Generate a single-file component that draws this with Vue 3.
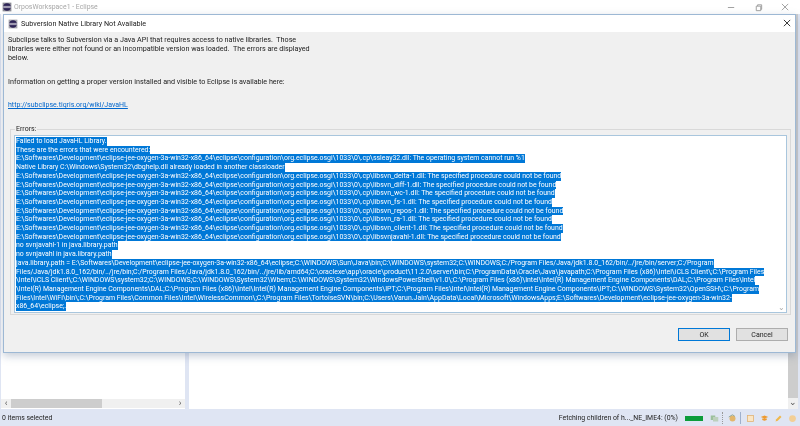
<template>
  <div class="workbench">
    <header class="window-bar">
      <svg class="app-icon" viewBox="0 0 16 16"><rect x="1" y="1" width="14" height="14" fill="#8d8d96"/><circle cx="8" cy="8" r="6" fill="#2c2255"/><path d="M2 7h12M2 9h12" stroke="#fff" stroke-width="1"/></svg>
      <span class="window-title">OrposWorkspace1 - Eclipse</span>
      <div class="window-controls">
        <svg viewBox="0 0 10 10"><path d="M1 5h7" stroke="#999"/></svg>
        <svg viewBox="0 0 10 10"><path d="M2.5 3.5h5v5h-5zM4 3.5V2h4.500v5H7.500" fill="none" stroke="#999"/></svg>
        <svg viewBox="0 0 10 10"><path d="M1 1l7 7M8 1l-7 7" stroke="#999"/></svg>
      </div>
    </header>

    <main class="panels">
      <section class="panel left-panel">
        <div class="h-scroll">
          <span class="arrow">‹</span>
          <div class="h-track"><div class="h-thumb"></div></div>
          <span class="arrow">›</span>
        </div>
      </section>
      <section class="panel right-panel">
        <div class="v-scroll">
          <div class="v-thumb"></div>
          <span class="v-arrow">⌄</span>
        </div>
      </section>
    </main>

    <footer class="status-bar">
      <span class="status-left">0 items selected</span>
      <div class="status-right">
        <span class="job">Fetching children of h..._NE_IME4: (0%)</span>
        <div class="progress"></div>
        <svg class="tray" viewBox="0 0 12 12"><rect x="1" y="2" width="6" height="6" fill="#9cc09c"/><rect x="4" y="4" width="7" height="6" fill="#bcd0bc"/></svg>
        <div class="sep"></div>
        <svg class="tray" viewBox="0 0 12 12"><circle cx="6" cy="6" r="4" fill="#e3b66c"/><path d="M1 4l5-3 3 2" fill="none" stroke="#7d9a86"/></svg>
        <div class="sep solid"></div>
        <svg class="tray" viewBox="0 0 12 12"><rect x="2" y="2" width="8" height="8" fill="#fbe6c4" stroke="#e0b070"/></svg>
        <svg class="tray" viewBox="0 0 12 12"><path d="M1 4l5-2 5 2-5 2zM3 6v2l3 1 3-1V6" fill="#ee9a2e"/></svg>
        <svg class="tray" viewBox="0 0 12 12"><path d="M2 10l1-3 5-5 2 2-5 5z" fill="#f0b84c"/></svg>
        <svg class="tray" viewBox="0 0 12 12"><circle cx="6" cy="6" r="4.500" fill="#f3cf96"/></svg>
      </div>
    </footer>

    <div class="dialog">
      <div class="dialog-title">
        <svg class="dialog-icon" viewBox="0 0 16 16"><rect x="1" y="1" width="14" height="14" fill="#a5a5ad"/><circle cx="8" cy="8" r="6" fill="#2c2255"/><path d="M2 7h12M2 9h12" stroke="#fff" stroke-width="1"/></svg>
        <span class="dialog-name">Subversion Native Library Not Available</span>
        <svg class="dialog-close" viewBox="0 0 10 10"><path d="M1 1l7 7M8 1l-7 7" stroke="#333" stroke-width="1.100"/></svg>
      </div>
      <div class="dialog-body">
        <p class="intro">Subclipse talks to Subversion via a Java API that requires access to native libraries.&nbsp; Those<br>libraries were either not found or an incompatible version was loaded.&nbsp; The errors are displayed<br>below.</p>
        <p class="info">Information on getting a proper version installed and visible to Eclipse is available here:</p>
        <a class="link">http://subclipse.tigris.org/wiki/JavaHL</a>
        <fieldset class="errors">
          <legend>Errors:</legend>
          <div class="error-box">
            <div class="error-lines">
              <div v-for="(line, i) in lines" :key="i" class="line">{{ line }}</div>
            </div>
            <span class="box-arrow">⌄</span>
          </div>
        </fieldset>
        <div class="buttons">
          <button class="btn primary">OK</button>
          <button class="btn">Cancel</button>
        </div>
      </div>
    </div>
  </div>
</template>

<script setup>
const base = String.raw`E:\Softwares\Development\eclipse-jee-oxygen-3a-win32-x86_64\eclipse\configuration\org.eclipse.osgi\1033\0\.cp` + '\\'
const notFound = 'The specified procedure could not be found'

const lines = [
  'Failed to load JavaHL Library.',
  'These are the errors that were encountered:',
  base + 'ssleay32.dll: The operating system cannot run %1',
  String.raw`Native Library C:\Windows\System32\dbghelp.dll already loaded in another classloader`,
  base + 'libsvn_delta-1.dll: ' + notFound,
  base + 'libsvn_diff-1.dll: ' + notFound,
  base + 'libsvn_wc-1.dll: ' + notFound,
  base + 'libsvn_fs-1.dll: ' + notFound,
  base + 'libsvn_repos-1.dll: ' + notFound,
  base + 'libsvn_ra-1.dll: ' + notFound,
  base + 'libsvn_client-1.dll: ' + notFound,
  base + 'libsvnjavahl-1.dll: ' + notFound,
  'no svnjavahl-1 in java.library.path',
  'no svnjavahl in java.library.path',
  String.raw`java.library.path = E:\Softwares\Development\eclipse-jee-oxygen-3a-win32-x86_64\eclipse;C:\WINDOWS\Sun\Java\bin;C:\WINDOWS\system32;C:\WINDOWS;C:/Program Files/Java/jdk1.8.0_162/bin/../jre/bin/server;C:/Program`,
  String.raw`Files/Java/jdk1.8.0_162/bin/../jre/bin;C:/Program Files/Java/jdk1.8.0_162/bin/../jre/lib/amd64;C:\oraclexe\app\oracle\product\11.2.0\server\bin;C:\ProgramData\Oracle\Java\javapath;C:\Program Files (x86)\Intel\iCLS Client\;C:\Program Files`,
  String.raw`\Intel\iCLS Client\;C:\WINDOWS\system32;C:\WINDOWS;C:\WINDOWS\System32\Wbem;C:\WINDOWS\System32\WindowsPowerShell\v1.0\;C:\Program Files (x86)\Intel\Intel(R) Management Engine Components\DAL;C:\Program Files\Intel`,
  String.raw`\Intel(R) Management Engine Components\DAL;C:\Program Files (x86)\Intel\Intel(R) Management Engine Components\IPT;C:\Program Files\Intel\Intel(R) Management Engine Components\IPT;C:\WINDOWS\System32\OpenSSH\;C:\Program`,
  String.raw`Files\Intel\WiFi\bin\;C:\Program Files\Common Files\Intel\WirelessCommon\;C:\Program Files\TortoiseSVN\bin;C:\Users\Varun.Jain\AppData\Local\Microsoft\WindowsApps;E:\Softwares\Development\eclipse-jee-oxygen-3a-win32-`,
  String.raw`x86_64\eclipse;.`,
]
</script>

<style>
html, body { margin: 0; background: #fff; }
</style>

<style scoped>
.workbench {
  position: relative;
  width: 800px; height: 426px;
  display: flex; flex-direction: column;
  overflow: hidden;
  background: #dfe5f3;
  font-family: Roboto, "Noto Sans", sans-serif;
  color: #222;
  filter: blur(0.25px);
}

.window-bar {
  height: 14px; flex-shrink: 0;
  display: flex; align-items: center;
  background: #fff;
  padding-left: 2px;
}
.app-icon { width: 10px; height: 10px; margin-right: 2px; }
.window-title { font-size: 6.900px; color: #a8a8a8; }
.window-controls { margin-left: auto; display: flex; gap: 18px; padding-right: 10px; }
.window-controls svg { width: 9px; height: 9px; }

.panels { flex: 1; display: flex; gap: 4px; padding: 0 2px 1px 1px; background: #dfe5f3; min-height: 0; }
.panel { background: #fff; position: relative; display: flex; }
.left-panel { width: 184px; align-items: flex-end; }
.right-panel { flex: 1; justify-content: flex-end; }

.h-scroll { width: 100%; height: 9px; margin-bottom: 1px; display: flex; align-items: center; background: #f0f0f0; }
.arrow { width: 10px; font-size: 9px; line-height: 9px; text-align: center; color: #555; }
.h-track { flex: 1; height: 100%; }
.h-thumb { width: 91px; height: 100%; background: #cdcdcd; }

.v-scroll { width: 10px; display: flex; flex-direction: column; background: #f0f0f0; }
.v-thumb { flex: 1; background: #cdcdcd; }
.v-arrow { height: 11px; font-size: 9px; line-height: 8px; text-align: center; color: #555; }

.status-bar {
  height: 16px; flex-shrink: 0;
  display: flex; align-items: center; justify-content: space-between;
  font-size: 6.900px;
  padding: 0 1px 0 2px;
}
.status-right { display: flex; align-items: center; height: 100%; }
.job { margin-right: 7px; }
.progress { width: 18px; height: 5px; background: #0c9c3a; margin-right: 4px; }
.tray { width: 9px; height: 9px; margin: 0 2.500px; }
.sep { width: 1px; height: 12px; margin: 0 1px; border-left: 1px dotted #999; }
.sep.solid { border-left: 1px solid #9fb0cc; }

.dialog {
  position: absolute;
  left: 3px; top: 14px;
  width: 793px; height: 339px;
  border: 1px solid #9db8d4;
  box-sizing: border-box;
  display: flex; flex-direction: column;
  box-shadow: 0 3px 8px rgba(90, 110, 140, 0.35);
}
.dialog-title {
  height: 17px; flex-shrink: 0;
  display: flex; align-items: center;
  background: #fff;
  padding-left: 4px;
}
.dialog-icon { width: 10px; height: 10px; margin-right: 3px; }
.dialog-name { font-size: 7.200px; color: #222; }
.dialog-close { width: 9px; height: 9px; margin-left: auto; margin-right: 3px; }

.dialog-body {
  flex: 1; min-height: 0;
  background: #f0f0f0;
  font-size: 7.200px;
  padding: 3px 4px 0 3px;
  display: flex; flex-direction: column;
}
.intro { margin: 0 0 0 1px; line-height: 9px; }
.info { margin: 15px 0 0 1px; line-height: 9px; }
.link { margin: 15px 0 0 1px; line-height: 9px; color: #0066cc; text-decoration: underline; font-size: 7px; }

.errors {
  margin: 15px 0 0 3px; padding: 2px 3px 3px 3px;
  border: 1px solid #d9d9d9;
  height: 190px;
  box-sizing: border-box;
  min-width: 0;
}
.errors legend { padding: 0 1px; margin-left: 1px; font-size: 7px; line-height: 8px; }
.error-box {
  position: relative;
  height: 100%;
  box-sizing: border-box;
  background: #fff;
  border: 1px solid #a9c6dd;
  padding: 1px;
  overflow: hidden;
}
.line {
  width: fit-content;
  white-space: nowrap;
  background: #0078d7;
  color: #fff;
  font-size: 6.950px;
  line-height: 8.700px;
}
.box-arrow { position: absolute; right: 1px; bottom: 1px; font-size: 8px; line-height: 6px; color: #aaa; }

.buttons { display: flex; justify-content: flex-end; gap: 6px; margin-top: 13px; padding-right: 3px; }
.btn {
  width: 52px; height: 13px; padding: 0;
  background: #e1e1e1;
  border: 1px solid #adadad;
  font: inherit; font-size: 7px; line-height: 10px;
  color: #222;
}
.btn.primary { border: 1px solid #0078d7; }
</style>
